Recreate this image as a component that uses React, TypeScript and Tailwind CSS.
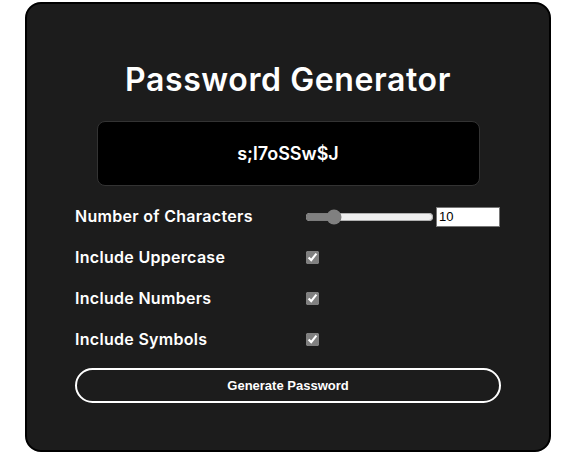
import { useState } from 'react';

const OPTIONS = ['Include Uppercase', 'Include Numbers', 'Include Symbols'];

export default function App() {
  const [length, setLength] = useState(10);

  return (
    <div className="min-h-[466px] bg-white pt-[2px] pl-[25px]">
      <div className="w-[526px] h-[450px] rounded-[16px] border-2 border-black bg-[#1c1c1c] px-[48px] pt-[52px] font-['Inter',sans-serif] text-white">
        <h1 className="text-center text-[32px] leading-[48px] font-semibold tracking-[0.6px]">Password Generator</h1>

        <div className="mx-auto mt-[17px] flex h-[65px] w-[383px] items-center justify-center rounded-[8px] border border-[#333] bg-black">
          <span className="text-[18px] font-semibold">s;l7oSSw$J</span>
        </div>

        <div className="mt-[15px] flex h-[30px] items-center">
          <label className="w-[230px] text-[16px] font-semibold tracking-[0.3px]">Number of Characters</label>
          <input
            type="range"
            min={1}
            max={50}
            value={length}
            onChange={(e) => setLength(Number(e.target.value))}
            className="mt-[1px] w-[129px] accent-[#808080]"
          />
          <input
            type="number"
            value={length}
            onChange={(e) => setLength(Number(e.target.value))}
            className="ml-[2px] mt-[1px] h-[20px] w-[64px] border border-[#767676] bg-white px-[2px] font-['Liberation_Sans',sans-serif] text-[13px] text-black"
          />
        </div>

        {OPTIONS.map((label) => (
          <div key={label} className="mt-[11px] flex h-[30px] items-center">
            <label className="w-[230px] text-[16px] font-semibold tracking-[0.3px]">{label}</label>
            <input type="checkbox" defaultChecked className="m-0 ml-[1px] mt-[1px] h-[13px] w-[13px] accent-[#808080]" />
          </div>
        ))}

        <button className="mt-[14px] h-[35px] w-full rounded-full border-2 border-white bg-transparent font-['Liberation_Sans',sans-serif] text-[13px] font-bold text-white">
          Generate Password
        </button>
      </div>
    </div>
  );
}
